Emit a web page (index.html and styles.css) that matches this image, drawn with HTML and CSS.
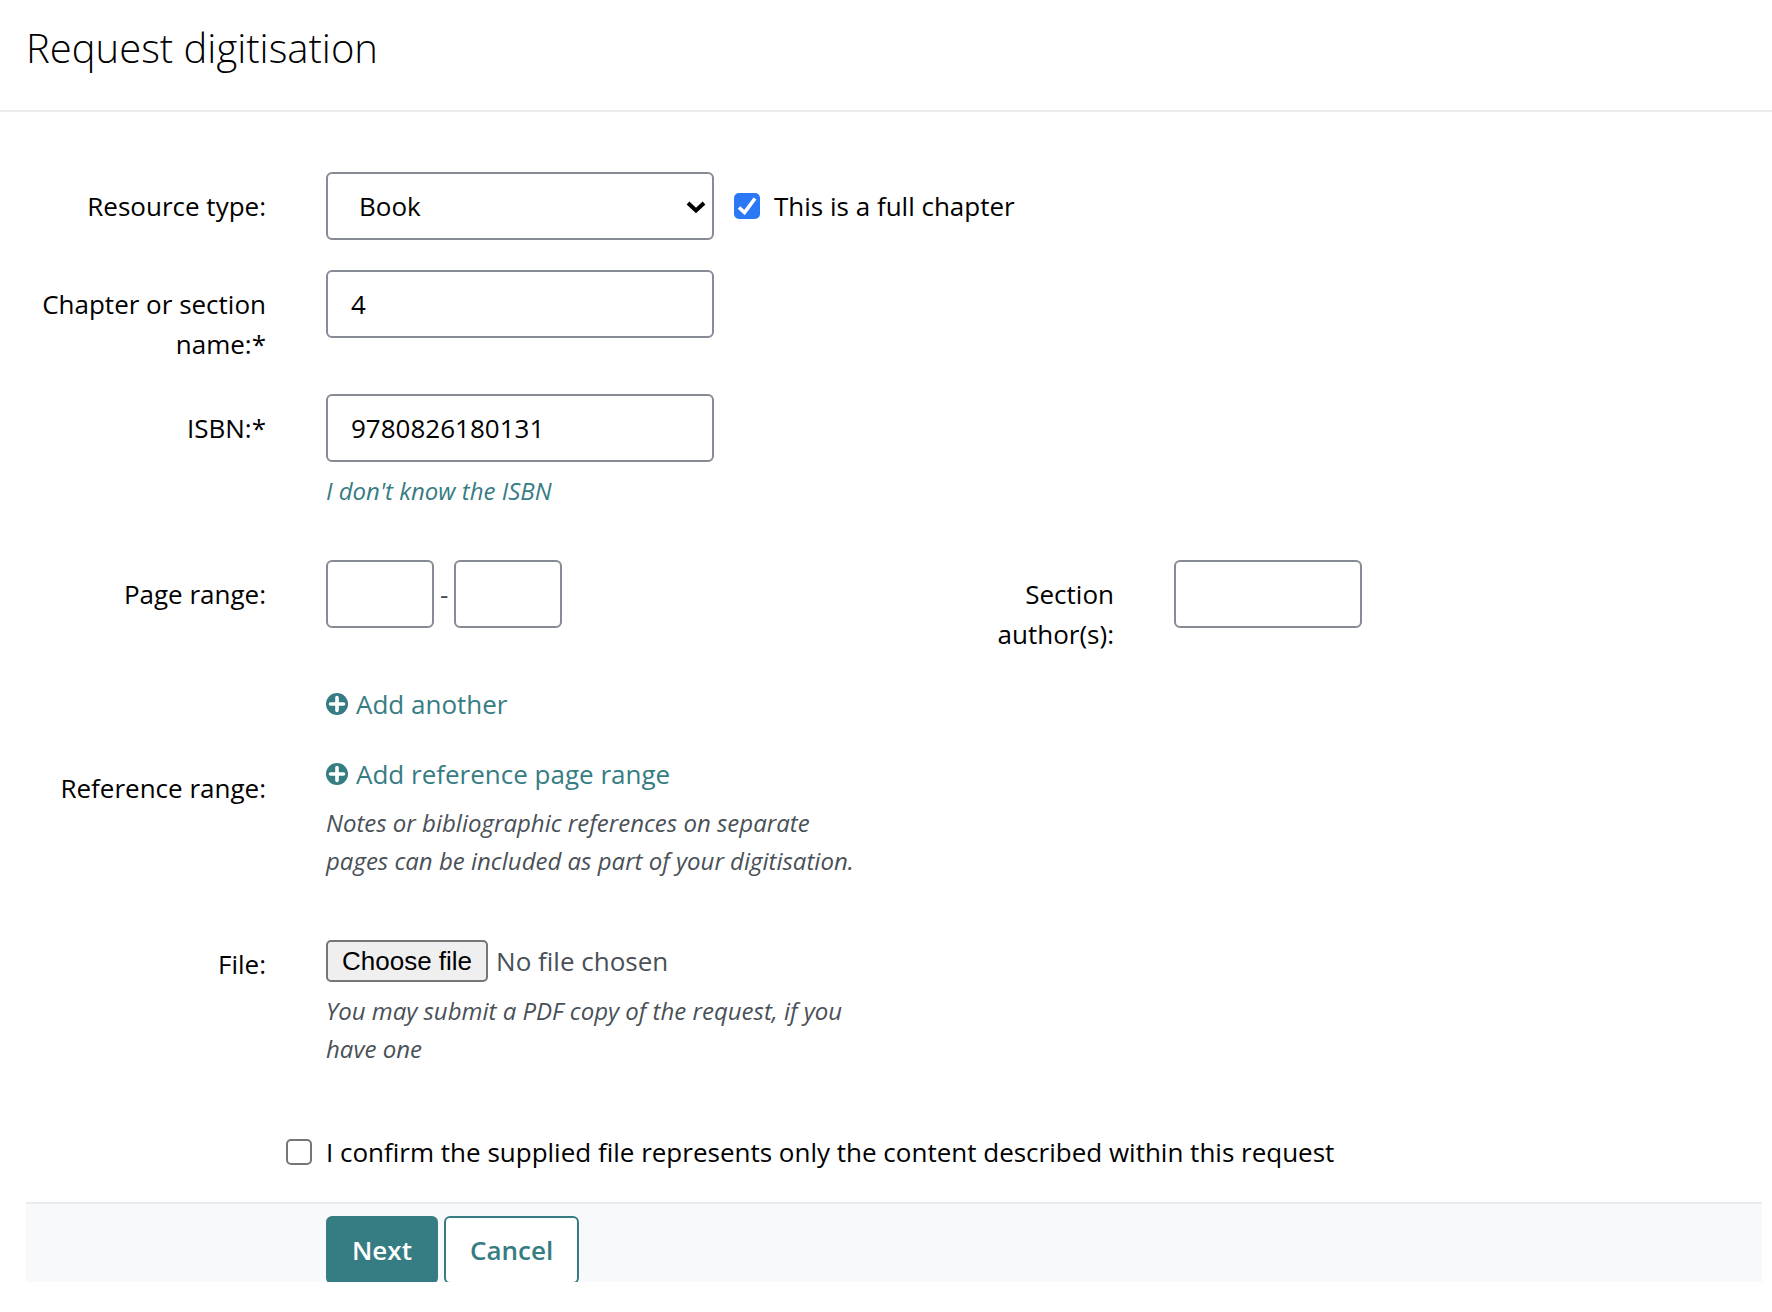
FILE: index.html
```html
<!DOCTYPE html>
<html lang="en-GB">
<head>
<meta charset="utf-8">
<meta name="viewport" content="width=device-width, initial-scale=1">
<title>Request digitisation</title>
<link rel="stylesheet" href="styles.css">
</head>
<body>
<header class="page-header">
  <h1 class="page-title">Request digitisation</h1>
</header>
<main>
<form class="request-form">
  <div class="form-row">
    <label class="row-label" for="resource-type">Resource type:</label>
    <div class="row-body inline-fields">
      <div class="select-wrap">
        <select class="control" id="resource-type">
          <option selected>Book</option>
          <option>Journal</option>
        </select>
        <svg class="select-arrow" viewBox="0 0 20 14" aria-hidden="true"><path d="M2 3l8 7.500 8-7.500" fill="none" stroke="#000" stroke-width="4"/></svg>
      </div>
      <label class="check">
        <span class="check-box">
          <input type="checkbox" checked>
          <svg class="check-mark" viewBox="0 0 26 26" aria-hidden="true"><path d="M5 14.500l5.500 5L21 5.500" fill="none" stroke="#fff" stroke-width="3.600"/></svg>
        </span>
        <span>This is a full chapter</span>
      </label>
    </div>
  </div>

  <div class="form-row">
    <label class="row-label" for="chapter">Chapter or section name:*</label>
    <div class="row-body"><input class="control" id="chapter" type="text" value="4"></div>
  </div>

  <div class="form-row form-row-spaced">
    <label class="row-label" for="isbn">ISBN:*</label>
    <div class="row-body">
      <input class="control" id="isbn" type="text" value="9780826180131">
      <p class="hint"><a href="#">I don't know the ISBN</a></p>
    </div>
  </div>

  <div class="form-row form-row-split">
    <label class="row-label" for="page-from">Page range:</label>
    <div class="row-body page-range">
      <input class="control control-page" id="page-from" type="text" aria-label="First page">
      <span>-</span>
      <input class="control control-page" type="text" aria-label="Last page">
    </div>
    <label class="row-label author-label" for="authors">Section author(s):</label>
    <div class="row-body"><input class="control control-author" id="authors" type="text"></div>
  </div>

  <div class="form-row">
    <div class="row-body row-body-offset">
      <a class="add-link" href="#"><svg class="add-icon" viewBox="0 0 22 22" aria-hidden="true"><circle cx="11" cy="11" r="11" fill="currentColor"/><path d="M11 4.500v13M4.500 11h13" stroke="#fff" stroke-width="3.600" stroke-linecap="round"/></svg>Add another</a>
    </div>
  </div>

  <div class="form-row form-row-spaced">
    <span class="row-label">Reference range:</span>
    <div class="row-body">
      <a class="add-link" href="#"><svg class="add-icon" viewBox="0 0 22 22" aria-hidden="true"><circle cx="11" cy="11" r="11" fill="currentColor"/><path d="M11 4.500v13M4.500 11h13" stroke="#fff" stroke-width="3.600" stroke-linecap="round"/></svg>Add reference page range</a>
      <p class="hint">Notes or bibliographic references on separate pages can be included as part of your digitisation.</p>
    </div>
  </div>

  <div class="form-row form-row-spaced">
    <label class="row-label" for="file">File:</label>
    <div class="row-body">
      <div class="file-picker">
        <span class="file-button">Choose file</span>
        <span class="file-status">No file chosen</span>
        <input class="file-input" id="file" type="file">
      </div>
      <p class="hint">You may submit a PDF copy of the request, if you have one</p>
    </div>
  </div>

  <div class="form-row">
    <div class="row-body row-body-offset confirm">
      <label class="check confirm-check">
        <span class="check-box"><input type="checkbox"></span>
        <span>I confirm the supplied file represents only the content described within this request</span>
      </label>
    </div>
  </div>

  <div class="actions">
    <button class="btn btn-primary" type="submit">Next</button>
    <button class="btn btn-outline" type="button">Cancel</button>
  </div>
</form>
</main>
</body>
</html>
```
FILE: styles.css
```css
* { box-sizing: border-box; }

:root {
  --teal: #367c83;
  --label-col: 296px;
}

body {
  margin: 0;
  background: #fff;
  color: #000;
  font: 26px/40px "Open Sans", "Noto Sans", sans-serif;
}

a { color: var(--teal); text-decoration: none; }

.page-header {
  padding: 24px 26px 38px;
  border-bottom: 2px solid #e9ebee;
}

.page-title {
  margin: 0;
  font-size: 40px;
  font-weight: 300;
  line-height: 48px;
}

.request-form { padding: 60px 10px 30px 0; }

.form-row {
  display: grid;
  grid-template-columns: var(--label-col) minmax(0, 1fr);
  margin-bottom: 30px;
}

.form-row-spaced { margin-bottom: 50px; }

.form-row-split { grid-template-columns: var(--label-col) minmax(0, 1fr) 178px minmax(248px, 618px); }

.row-label {
  padding: 14px 30px 0;
  text-align: right;
}

.row-body { padding: 0 30px; }
.row-body-offset { grid-column: 2; }

.control {
  display: block;
  width: 388px;
  max-width: 100%;
  height: 68px;
  padding: 0 23px;
  border: 2px solid #868b95;
  border-radius: 6px;
  background: #fff;
  color: #000;
  font: inherit;
}

.control-page { width: 108px; }
.control-author { width: 188px; }

.inline-fields {
  display: flex;
  align-items: center;
  gap: 20px;
}

.select-wrap { position: relative; }

select.control {
  appearance: none;
  padding: 0 31px;
}

.select-arrow {
  position: absolute;
  top: 28px;
  right: 8px;
  width: 20px;
  height: 14px;
  pointer-events: none;
}

.check {
  display: flex;
  align-items: center;
  gap: 14px;
}

.check-box {
  position: relative;
  flex: none;
  width: 26px;
  height: 26px;
}

.check-box input {
  appearance: none;
  display: block;
  width: 26px;
  height: 26px;
  margin: 0;
  border: 2px solid #767676;
  border-radius: 5px;
  background: #fff;
}

.check-box input:checked {
  border-color: #2b78f6;
  background: #2b78f6;
}

.check-mark {
  position: absolute;
  inset: 0;
  pointer-events: none;
}

.page-range {
  display: flex;
  align-items: center;
  align-self: start;
  gap: 6px;
  color: #495057;
}

.author-label { padding-left: 0; }

.add-link {
  display: flex;
  align-items: center;
  gap: 8px;
  width: fit-content;
}

.add-icon { width: 22px; height: 22px; }

.hint {
  max-width: 532px;
  margin: 10px 0 0;
  color: #495057;
  font-size: 24px;
  font-style: italic;
  line-height: 38px;
}

.file-picker {
  position: relative;
  display: flex;
  align-items: center;
  gap: 8px;
  width: fit-content;
  margin-top: 10px;
}

.file-button {
  padding: 0 14px;
  border: 2px solid #767676;
  border-radius: 5px;
  background: #efefef;
  font: 26px/38px "Liberation Sans", Arial, sans-serif;
}

.file-status { color: #495057; }

.file-input {
  position: absolute;
  inset: 0;
  width: 100%;
  opacity: 0;
}

.confirm { padding: 14px 30px 0 0; }
.confirm-check { margin-left: -10px; }

.actions {
  display: flex;
  gap: 6px;
  height: 80px;
  margin-left: 26px;
  padding: 12px 300px;
  overflow: hidden;
  border-top: 2px solid #e9ebed;
  background: #f8f9fb;
}

.btn {
  flex: none;
  height: 68px;
  padding: 0 24px;
  border: 2px solid var(--teal);
  border-radius: 6px;
  font: inherit;
  font-weight: 600;
}

.btn-primary { background: var(--teal); color: #fff; }
.btn-outline { background: #fff; color: var(--teal); }
```
